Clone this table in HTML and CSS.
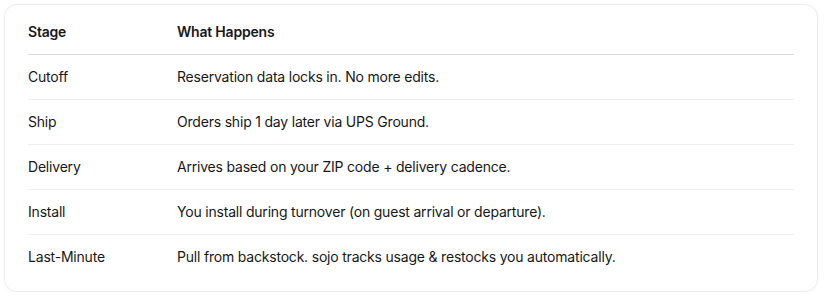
FILE: index.html
```html
<!DOCTYPE html>
<html>
    <head>
        <title>Stages</title>
        <link rel="stylesheet" href="styles.css">
    </head>
    <body>
        <div class="card">
            <table class="stages">
                <thead>
                    <tr>
                        <th class="stage">Stage</th>
                        <th>What Happens</th>
                    </tr>
                </thead>
                <tbody>
                    <tr>
                        <td>Cutoff</td>
                        <td>Reservation data locks in. No more edits.</td>
                    </tr>
                    <tr>
                        <td>Ship</td>
                        <td>Orders ship 1 day later via UPS Ground.</td>
                    </tr>
                    <tr>
                        <td>Delivery</td>
                        <td>Arrives based on your ZIP code + delivery cadence.</td>
                    </tr>
                    <tr>
                        <td>Install</td>
                        <td>You install during turnover (on guest arrival or departure).</td>
                    </tr>
                    <tr>
                        <td>Last-Minute</td>
                        <td>Pull from backstock. sojo tracks usage &amp; restocks you automatically.</td>
                    </tr>
                </tbody>
            </table>
        </div>
    </body>
</html>
```

FILE: styles.css
```css
body {
    margin: 0;
    padding: 4px 8px 0 4px;
    background: #fff;
    color: #18181a;
    font-family: Inter, "Liberation Sans", sans-serif;
    font-size: 14px;
    letter-spacing: -0.2px;
}
.card {
    border: 1px solid #ececec;
    border-radius: 13px;
    box-shadow: 0 1px 4px rgba(0, 0, 0, 0.04);
    padding: 5px 23px 12px 23px;
}
.stages {
    width: 100%;
    border-collapse: collapse;
}
th, td {
    text-align: left;
    line-height: 20px;
    padding: 12px 0;
}
th {
    font-weight: 600;
    border-bottom: 1px solid #dcdcdc;
}
th.stage {
    width: 149px;
}
td {
    border-bottom: 1px solid #efefef;
}
tbody tr:last-child td {
    border-bottom: none;
}
```
